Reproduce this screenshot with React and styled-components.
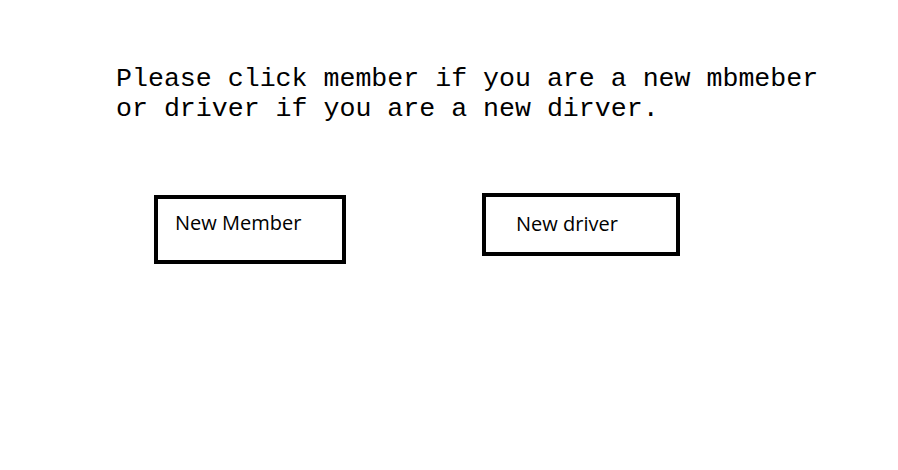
import React from 'react';
import styled, { createGlobalStyle } from 'styled-components';

const GlobalStyle = createGlobalStyle`
    body {
        margin: 0;
        background: #ffffff;
    }
`;

const Page = styled.div`
    width: 898px;
    height: 470px;
    padding: 64px 0 0 116px;
    box-sizing: border-box;
`;

const Prompt = styled.p`
    margin: 0;
    font-family: "Liberation Mono", "Courier New", monospace;
    font-size: 26.6px;
    line-height: 30px;
    color: #000;
`;

const ButtonRow = styled.div`
    display: flex;
    align-items: flex-start;
    margin-top: 69px;
    padding-left: 38px;
    gap: 136px;
`;

const ChoiceButton = styled.button`
    box-sizing: border-box;
    display: flex;
    align-items: flex-start;
    width: ${(p) => p.w}px;
    height: ${(p) => p.h}px;
    margin-top: ${(p) => p.offset}px;
    border: 4px solid #000;
    background: #fff;
    padding: ${(p) => p.pad};
    font-family: "Open Sans", "Liberation Sans", sans-serif;
    font-size: 20px;
    line-height: 24px;
    color: #000;
    cursor: pointer;
`;

function App() {
    return (
        <>
            <GlobalStyle />
            <Page>
                <Prompt>
                    Please click member if you are a new mbmeber
                    <br />
                    or driver if you are a new dirver.
                </Prompt>
                <ButtonRow>
                    <ChoiceButton w={192} h={69} offset={2} pad="12px 0 0 17px">
                        New Member
                    </ChoiceButton>
                    <ChoiceButton w={198} h={63} offset={0} pad="15px 0 0 30px">
                        New driver
                    </ChoiceButton>
                </ButtonRow>
            </Page>
        </>
    );
}

export default App;
